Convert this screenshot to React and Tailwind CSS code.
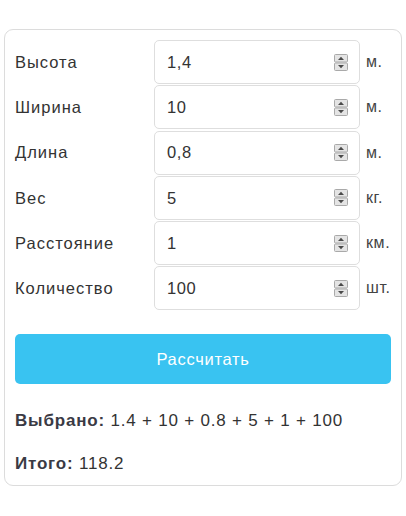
import React from "react";

const rows = [
  { id: 1, label: "Высота", value: "1,4", unit: "м." },
  { id: 2, label: "Ширина", value: "10", unit: "м." },
  { id: 3, label: "Длина", value: "0,8", unit: "м." },
  { id: 4, label: "Вес", value: "5", unit: "кг." },
  { id: 5, label: "Расстояние", value: "1", unit: "км." },
  { id: 6, label: "Количество", value: "100", unit: "шт." },
];

const Spinner = () => (
  <svg width="14" height="17" viewBox="0 0 14 17" className="shrink-0">
    <rect x="0.5" y="0.5" width="13" height="7.5" rx="1" fill="#e4e4e4" stroke="#a9a9a9" />
    <rect x="0.5" y="9" width="13" height="7.5" rx="1" fill="#e4e4e4" stroke="#a9a9a9" />
    <path d="M4 6 L7 2.8 L10 6 Z" fill="#4a4a4a" />
    <path d="M4 11 L7 14.2 L10 11 Z" fill="#4a4a4a" />
  </svg>
);

const App = () => {
  return (
    <div className="w-[406px] h-[516px] bg-white font-['Liberation_Sans',Arial,sans-serif] tracking-[0.6px] text-[#333] pt-[29px] px-[4px]">
      <div className="w-[398px] h-[457px] border border-[#dcdcdc] rounded-[9px] pt-[10px] px-[10px]">
        <div className="flex flex-col gap-[1.3px]">
          {rows.map((row) => (
            <div key={row.id} className="flex items-center h-[44px]">
              <div className="w-[139px] text-[16.5px] tracking-[1px]">{row.label}</div>
              <div className="w-[206px] h-[44px] border border-[#dedede] rounded-[5px] flex items-center pl-[12px] pr-[11px]">
                <span className="flex-1 text-[16.5px] text-[#333]">{row.value}</span>
                <Spinner />
              </div>
              <div className="pl-[6px] text-[16px] text-[#444]">{row.unit}</div>
            </div>
          ))}
        </div>

        <button className="mt-[24px] w-[376px] h-[50px] rounded-[5px] bg-[#39c3f1] text-white text-[16.5px] tracking-[0.7px] flex items-center justify-center">
          Рассчитать
        </button>

        <div className="mt-[25px] text-[17px] tracking-[0.8px] text-[#333] leading-[24px]">
          <span className="font-bold text-[#3a3a44]">Выбрано:</span> 1.4 + 10 + 0.8 + 5 + 1 + 100
        </div>
        <div className="mt-[19px] text-[17px] tracking-[0.8px] text-[#333] leading-[24px]">
          <span className="font-bold text-[#3a3a44]">Итого:</span> 118.2
        </div>
      </div>
    </div>
  );
};

export default App;
